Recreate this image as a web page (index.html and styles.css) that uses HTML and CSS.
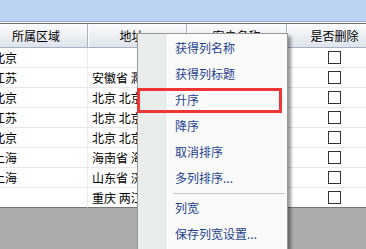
FILE: index.html
```html
<!DOCTYPE html>
<html lang="zh-CN">
<head>
  <meta charset="UTF-8" />
  <title>表格右键菜单</title>
  <link rel="stylesheet" href="styles.css">
</head>
<body>

  <div class="titlebar"></div>
  <div class="divider"></div>

  <div class="grid">
    <div class="row head">
      <div class="cell c1">所属区域</div>
      <div class="cell c2">地址</div>
      <div class="cell c3">客户名称</div>
      <div class="cell c4">是否删除</div>
    </div>
    <div class="row">
      <div class="cell c1">北京</div>
      <div class="cell c2"></div>
      <div class="cell c3"></div>
      <div class="cell c4"><span class="check"></span></div>
    </div>
    <div class="row">
      <div class="cell c1">江苏</div>
      <div class="cell c2">安徽省 滁州市</div>
      <div class="cell c3"></div>
      <div class="cell c4"><span class="check"></span></div>
    </div>
    <div class="row">
      <div class="cell c1">北京</div>
      <div class="cell c2">北京 北京市</div>
      <div class="cell c3"></div>
      <div class="cell c4"><span class="check"></span></div>
    </div>
    <div class="row">
      <div class="cell c1">江苏</div>
      <div class="cell c2">北京 北京市</div>
      <div class="cell c3"></div>
      <div class="cell c4"><span class="check"></span></div>
    </div>
    <div class="row">
      <div class="cell c1">北京</div>
      <div class="cell c2">北京 北京市</div>
      <div class="cell c3"></div>
      <div class="cell c4"><span class="check"></span></div>
    </div>
    <div class="row">
      <div class="cell c1">上海</div>
      <div class="cell c2">海南省 海口市</div>
      <div class="cell c3"></div>
      <div class="cell c4"><span class="check"></span></div>
    </div>
    <div class="row">
      <div class="cell c1">上海</div>
      <div class="cell c2">山东省 济南市</div>
      <div class="cell c3"></div>
      <div class="cell c4"><span class="check"></span></div>
    </div>
    <div class="row last">
      <div class="cell c1"></div>
      <div class="cell c2">重庆 两江新区</div>
      <div class="cell c3"></div>
      <div class="cell c4"><span class="check"></span></div>
    </div>
  </div>

  <!-- context menu over the grid -->
  <div class="menu">
    <div class="item">获得列名称</div>
    <div class="item">获得列标题</div>
    <div class="item">升序</div>
    <div class="item">降序</div>
    <div class="item">取消排序</div>
    <div class="item">多列排序...</div>
    <div class="sep"></div>
    <div class="item">列宽</div>
    <div class="item">保存列宽设置...</div>
    <div class="sep"></div>
  </div>

  <div class="highlight"></div>

</body>
</html>
```

FILE: styles.css
```css
body {
  margin: 0;
  width: 366px;
  height: 249px;
  overflow: hidden;
  background: #ababab;
  font-family: "Noto Sans CJK SC", "Noto Sans", sans-serif;
  font-size: 12px;
  color: #000;
  position: relative;
}

.titlebar {
  height: 21px;
  background: #bcd4f4;
  border-bottom: 1px solid #98aac2;
}

.divider {
  height: 1px;
  background: #fff;
  border-bottom: 1px solid #6e6e6e;
}

.grid {
  margin-left: -15px;
  width: 402px;
  background: #fff;
}

.row {
  display: grid;
  grid-template-columns: 103px 99px 100px 100px;
  height: 20px;
}

.cell {
  box-sizing: border-box;
  height: 20px;
  line-height: 19px;
  border-bottom: 1px solid #e8e8e8;
  border-right: 1px solid #ececec;
  padding-left: 4px;
  white-space: nowrap;
  overflow: hidden;
}

.c1 {
  padding-left: 8px;
}

.row.head {
  height: 24px;
}

.head .cell {
  height: 24px;
  line-height: 23px;
  text-align: center;
  padding-left: 0;
  background: linear-gradient(#fcfcfd, #dee3eb);
  border-bottom: 1px solid #a6b1c3;
  border-right: 1px solid #a9b3c4;
  box-shadow: inset 1px 0 0 #fff;
}

.head .c2 {
  padding-right: 11px;
}

.row.last .cell {
  border-bottom-color: #777;
}

.c4 {
  display: flex;
  justify-content: center;
  align-items: center;
  padding-left: 0;
  padding-right: 4px;
}

.check {
  width: 11px;
  height: 11px;
  border: 1px solid #333;
  background: #fff;
}

.menu {
  position: absolute;
  left: 137px;
  top: 33px;
  width: 149px;
  height: 240px;
  padding-top: 1px;
  background: #fafafa linear-gradient(90deg, #e9edec 27px, #e1e4e3 27px, #e1e4e3 28px, transparent 28px);
  border: 1px solid #999;
  box-shadow: 3px 3px 3px rgba(0, 0, 0, 0.4);
}

.item {
  height: 26px;
  line-height: 26px;
  padding-left: 37px;
  color: #1e3f92;
  white-space: nowrap;
}

.sep {
  height: 1px;
  margin: 2px 2px 1px 35px;
  background: #c8c8c8;
}

.highlight {
  position: absolute;
  left: 137px;
  top: 88px;
  width: 139px;
  height: 19px;
  border: 3px solid #ef3535;
}
```
